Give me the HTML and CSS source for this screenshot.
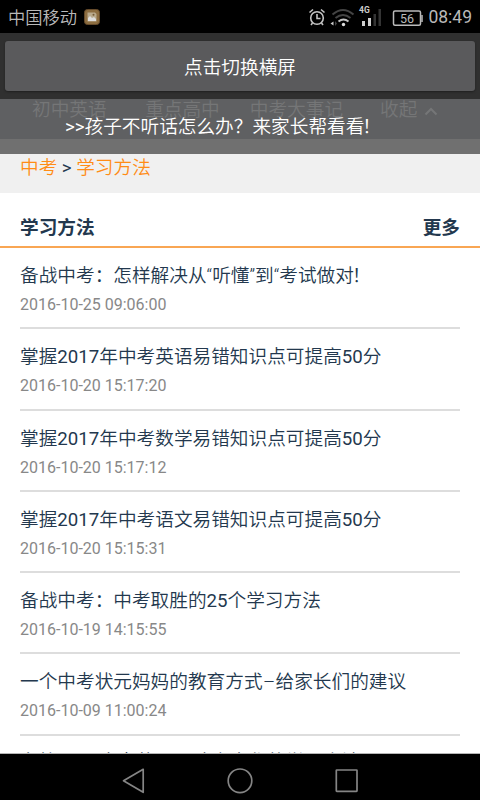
FILE: index.html
```html
<!DOCTYPE html>
<html lang="zh-CN">
<head>
<meta charset="utf-8">
<title>学习方法</title>
<link rel="stylesheet" href="styles.css">
</head>
<body>
<div class="screen">
  <header class="status">
    <span class="carrier">中国移动</span>
    <svg class="app" width="16" height="16" viewBox="0 0 16 16"><rect x=".5" y=".5" width="15" height="15" rx="3" fill="#8c6d40" stroke="#664b2b"/><path d="M3.5 3.5H11L12.5 5v7.5h-9z" fill="#b9aa8d"/><path d="M4 12V9l2-2 2 2 2-1 2 2v2z" fill="#ddd"/><circle cx="9.5" cy="5.8" r="1" fill="#755b35"/></svg>
    <svg class="indicators" width="118" height="28" viewBox="306 2 118 28" fill="none">
      <g stroke="#c4c4c4" stroke-width="1.6"><circle cx="317" cy="17" r="6.3"/><path d="M317 13v4.500h3.500M309.500 11.500l3.500-3M324.500 11.500l-3.500-3M312.500 22l-1.500 2M321.500 22l1.500 2"/></g>
      <g stroke-width="2"><path d="M332.500 13.500q10.500-9 21 0M335.500 17q7.500-6 15 0" stroke="#444"/><path d="M338.500 20.500q5-4 10 0" stroke="#c4c4c4"/></g>
      <circle cx="343.500" cy="23.500" r="1.700" fill="#ddd"/><path d="M333.500 20.500v4l-3-2z" fill="#ccc"/><path d="M335 20v5l2-2.500z" fill="#444"/>
      <text x="359" y="12" class="network">4G</text>
      <path d="M362 20h3v5h-3zM368 17h3v8h-3z" fill="#d0d0d0"/><path d="M373.500 13h2.500v12h-2.500zM378.500 8h2.500v17h-2.500z" fill="#343434"/>
      <rect x="393.500" y="10" width="27" height="14.300" rx="1.500" stroke="#bbb" stroke-width="1.500"/><path d="M422 14v7" stroke="#bbb" stroke-width="1.500"/>
      <text x="400" y="21.700" class="battery">56</text>
    </svg>
    <time>08:49</time>
  </header>
  <div class="rotate"><button>点击切换横屏</button></div>
  <div class="banner">
    <div class="tabs"><span>初中英语</span><span>重点高中</span><span>中考大事记</span><span>收起</span><svg width="14" height="9" viewBox="0 0 14 9"><path d="M1.500 7.500L7 2l5.500 5.500" fill="none" stroke="#757677" stroke-width="2"/></svg></div>
    <div class="notice"><span class="latin">&gt;&gt;</span>孩子不听话怎么办？来家长帮看看<span class="mark">！</span></div>
  </div>
  <nav class="crumb"><a>中考</a> <span class="latin">&gt;</span> <a>学习方法</a></nav>
  <main>
    <div class="heading"><h1>学习方法</h1><b>更多</b></div>
    <ul>
      <li><h2>备战中考：怎样解决从“听懂”到“考试做对<span class="mark">！</span></h2><p>2016-10-25 09:06:00</p></li>
      <li><h2>掌握<span class="latin">2017</span>年中考英语易错知识点可提高<span class="latin">50</span>分</h2><p>2016-10-20 15:17:20</p></li>
      <li><h2>掌握<span class="latin">2017</span>年中考数学易错知识点可提高<span class="latin">50</span>分</h2><p>2016-10-20 15:17:12</p></li>
      <li><h2>掌握<span class="latin">2017</span>年中考语文易错知识点可提高<span class="latin">50</span>分</h2><p>2016-10-20 15:15:31</p></li>
      <li><h2>备战中考：中考取胜的<span class="latin">25</span>个学习方法</h2><p>2016-10-19 14:15:55</p></li>
      <li><h2>一个中考状元妈妈的教育方式<span class="dash">–</span>给家长们的建议</h2><p>2016-10-09 11:00:24</p></li>
      <li class="partial"><h2>名校<span class="latin">2016</span>中考状元：谈高中化的学习方法</h2></li>
    </ul>
  </main>
  <footer>
    <svg width="480" height="46" viewBox="0 754 480 46" fill="none" stroke="#858585" stroke-width="1.700" stroke-linejoin="round"><path d="M143.200 769.300v23L123.500 780.800z"/><circle cx="240" cy="780.800" r="11.800"/><rect x="336.300" y="770" width="20.700" height="21.300" rx=".5"/></svg>
  </footer>
</div>
</body>
</html>
```
FILE: styles.css
```css
* { box-sizing: border-box; }
body { margin: 0; font-family: Roboto, "Noto Sans CJK SC", sans-serif; }
.screen { width: 480px; height: 800px; display: flex; flex-direction: column; overflow: hidden; background: #fff; font-size: 18.67px; color: #23384e; }
.status { flex: none; height: 33px; background: #000; color: #b9b9b9; display: flex; align-items: center; padding: 0 8px; }
.carrier { font-size: 17.3px; font-weight: 350; }
.app { margin-left: 7px; }
.indicators { margin-left: auto; margin-right: 4px; }
.network { font: bold 8.5px Roboto, sans-serif; fill: #ccc; }
.battery { font: 12.5px Roboto, sans-serif; fill: #bbb; }
time { font-size: 17.5px; }
.rotate { flex: none; height: 66px; padding: 8px 5px; background: #303030; }
.rotate button { display: block; width: 100%; height: 50px; padding: 0 0 1px; border: 0; border-radius: 3px; background: #5a5a5c; color: #fff; font: inherit; font-weight: 350; box-shadow: 0 1px 2px #202020; }
.banner { flex: none; height: 55px; background: linear-gradient(#5f6062 40px, #707070 40px); position: relative; }
.tabs { display: flex; align-items: center; height: 18px; padding-left: 32px; color: #757677; font-weight: 350; }
.tabs span { margin-right: 38.500px; white-space: nowrap; position: relative; top: -1px; }
.tabs span:nth-child(2) { margin-right: 30px; }
.tabs span:nth-child(3) { margin-right: 37px; }
.tabs span:nth-child(4) { margin-right: 7px; }
.tabs svg { margin-top: 7px; }
.notice { position: absolute; left: 65px; top: 14px; line-height: 28px; color: #fff; font-weight: 350; white-space: nowrap; }
.mark { margin-left: -2px; }
.latin { font-weight: 400; }
.crumb { flex: none; height: 39px; padding-left: 20px; line-height: 28px; background: #f0f0f0; font-weight: 350; }
.crumb a { color: #ff8c16; }
main { flex: 1; min-height: 0; overflow: hidden; border-bottom: 1px solid #b5b5b5; }
.heading { height: 55px; padding: 0 20px; border-bottom: 2px solid #f9a653; display: flex; justify-content: space-between; line-height: 70px; }
h1, h2, p, ul { margin: 0; padding: 0; font-size: inherit; }
h1, b { font-weight: 700; }
ul { list-style: none; padding: 0 20px; }
li { height: 81.25px; padding-top: 13px; border-bottom: 2px solid #ddd; }
h2 { font-weight: 350; line-height: 31px; white-space: nowrap; }
.partial { padding-top: 11px; }
.dash { display: inline-block; width: 13px; text-align: center; }
p { font-size: 16px; line-height: 25px; color: #888; }
footer { flex: none; height: 46px; background: #000; }
footer svg { display: block; }
```
